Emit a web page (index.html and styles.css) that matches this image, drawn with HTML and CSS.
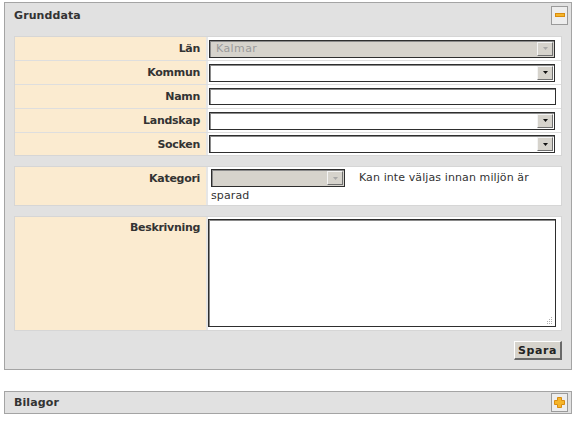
FILE: index.html
```html
<!DOCTYPE html>
<html lang="sv">
<head>
<meta charset="utf-8">
<title>Grunddata</title>
<link rel="stylesheet" href="styles.css">
</head>
<body>
<div class="panel">
  <div class="panel-head">
    <span class="panel-title">Grunddata</span>
    <span class="toggle">
      <svg width="10" height="4" viewBox="0 0 10 4"><rect x="0.5" y="0.5" width="9" height="3" fill="#f5b52a" stroke="#d98c10" stroke-width="1"/></svg>
    </span>
  </div>
  <div class="panel-body">
    <div class="form-block">
      <div class="row">
        <div class="label">Län</div>
        <div class="cell">
          <div class="select disabled"><span class="sel-text">Kalmar</span><span class="arrow"><svg width="5" height="3" viewBox="0 0 5 3"><path d="M0 0H5L2.5 3Z" fill="#a8a8a8"/></svg></span></div>
        </div>
      </div>
      <div class="row">
        <div class="label">Kommun</div>
        <div class="cell">
          <div class="select"><span class="sel-text"></span><span class="arrow"><svg width="5" height="3" viewBox="0 0 5 3"><path d="M0 0H5L2.5 3Z" fill="#111"/></svg></span></div>
        </div>
      </div>
      <div class="row">
        <div class="label">Namn</div>
        <div class="cell">
          <div class="textbox"></div>
        </div>
      </div>
      <div class="row">
        <div class="label">Landskap</div>
        <div class="cell">
          <div class="select"><span class="sel-text"></span><span class="arrow"><svg width="5" height="3" viewBox="0 0 5 3"><path d="M0 0H5L2.5 3Z" fill="#111"/></svg></span></div>
        </div>
      </div>
      <div class="row last">
        <div class="label">Socken</div>
        <div class="cell">
          <div class="select"><span class="sel-text"></span><span class="arrow"><svg width="5" height="3" viewBox="0 0 5 3"><path d="M0 0H5L2.5 3Z" fill="#111"/></svg></span></div>
        </div>
      </div>
    </div>

    <div class="form-block">
      <div class="row last tall">
        <div class="label top">Kategori</div>
        <div class="cell wrap">
          <span class="select disabled small"><span class="sel-text"></span><span class="arrow"><svg width="5" height="3" viewBox="0 0 5 3"><path d="M0 0H5L2.5 3Z" fill="#a8a8a8"/></svg></span></span><span class="note">Kan inte väljas innan miljön är sparad</span>
        </div>
      </div>
    </div>

    <div class="form-block">
      <div class="row last desc">
        <div class="label top2">Beskrivning</div>
        <div class="cell area-cell">
          <div class="textarea"><span class="grip"><svg width="7" height="7" viewBox="0 0 7 7"><g fill="#b0b0b0"><rect x="5" y="0" width="1" height="1"/><rect x="3" y="2" width="1" height="1"/><rect x="5" y="2" width="1" height="1"/><rect x="1" y="4" width="1" height="1"/><rect x="3" y="4" width="1" height="1"/><rect x="5" y="4" width="1" height="1"/><rect x="1" y="6" width="1" height="1"/><rect x="3" y="6" width="1" height="1"/><rect x="5" y="6" width="1" height="1"/></g></svg></span></div>
        </div>
      </div>
    </div>

    <div class="actions">
      <span class="btn">Spara</span>
    </div>
  </div>
</div>

<div class="panel collapsed">
  <div class="panel-head small-head">
    <span class="panel-title">Bilagor</span>
    <span class="toggle">
      <svg width="11" height="11" viewBox="0 0 11 11"><path d="M3.5 0.5H7.5V3.5H10.5V7.5H7.5V10.5H3.5V7.5H0.5V3.5H3.5Z" fill="#f5b52a" stroke="#d98c10" stroke-width="1"/></svg>
    </span>
  </div>
</div>
</body>
</html>
```
FILE: styles.css
```css
html, body {
  margin: 0;
  padding: 0;
  background: #ffffff;
}
body {
  padding: 2px 10px 0 4px;
  font-family: "DejaVu Sans", Verdana, sans-serif;
  font-size: 11px;
  color: #333333;
}
.panel {
  border: 1px solid #a4a4a4;
  background: #e1e1e1;
}
.panel.collapsed {
  margin-top: 21px;
}
.panel-head {
  height: 24px;
  display: flex;
  align-items: center;
  justify-content: space-between;
  padding: 0 3px 0 9px;
}
.small-head {
  height: 21px;
}
.panel-title {
  font-weight: bold;
  font-size: 11px;
  color: #333333;
  letter-spacing: 0.1px;
}
.toggle {
  width: 15px;
  height: 17px;
  border: 1px solid #9a9a9a;
  background: #ededed;
  display: flex;
  align-items: center;
  justify-content: center;
}
.panel-body {
  padding: 9px 9px 9px 9px;
}
.form-block {
  background: #ffffff;
  border: 1px solid #d6d6d6;
  margin-bottom: 10px;
}
.row {
  box-sizing: border-box;
  display: flex;
  height: 24px;
  border-bottom: 1px solid #dedede;
}
.row.last {
  border-bottom: none;
  height: 22px;
}
.label {
  width: 185px;
  flex: none;
  background: #fbebd0;
  border-right: 2px solid #e6e6e6;
  font-weight: bold;
  text-align: right;
  padding-right: 6px;
  display: flex;
  align-items: center;
  justify-content: flex-end;
  color: #333333;
  letter-spacing: -0.3px;
}
.label.top {
  align-items: flex-start;
  padding-top: 5px;
}
.label.top2 {
  align-items: flex-start;
  padding-top: 4px;
}
.cell {
  flex: 1;
  display: flex;
  align-items: center;
  padding: 0 6px 0 1px;
}
.select {
  box-sizing: border-box;
  width: 346px;
  height: 18px;
  border: 1px solid #2e2e2e;
  background: #ffffff;
  display: flex;
  align-items: center;
  justify-content: space-between;
  box-shadow: inset 1px 1px 0 #8a8a8a;
}
.select.disabled {
  background: #d6d3cc;
}
.sel-text {
  padding-left: 6px;
  color: #9a9a9a;
  font-size: 11px;
  letter-spacing: 0.4px;
}
.arrow {
  box-sizing: border-box;
  width: 16px;
  height: 14px;
  margin-right: 1px;
  background: #d6d3cc;
  border-top: 1px solid #f4f4f4;
  border-left: 1px solid #f4f4f4;
  border-right: 1px solid #707070;
  border-bottom: 1px solid #707070;
  display: flex;
  align-items: center;
  justify-content: center;
}
.textbox {
  box-sizing: border-box;
  width: 347px;
  height: 17px;
  border: 1px solid #2e2e2e;
  box-shadow: inset 1px 1px 0 #8a8a8a;
  background: #ffffff;
}
.row.tall {
  height: 38px;
}
.cell.wrap {
  display: block;
  padding: 2px 10px 0 3px;
  line-height: 17px;
  letter-spacing: 0.1px;
}
.select.small {
  display: inline-flex;
  vertical-align: top;
  width: 134px;
  height: 18px;
  margin-right: 14px;
}
.note {
  color: #333333;
}
.row.desc {
  height: 113px;
}
.area-cell {
  align-items: flex-start;
  padding: 2px 5px 0 0;
}
.textarea {
  box-sizing: border-box;
  width: 348px;
  height: 108px;
  border: 1px solid #2e2e2e;
  box-shadow: inset 1px 1px 0 #8a8a8a;
  background: #ffffff;
  display: flex;
  align-items: flex-end;
  justify-content: flex-end;
}
.grip {
  display: flex;
  margin: 0 2px 2px 0;
}
.actions {
  display: flex;
  justify-content: flex-end;
}
.btn {
  box-sizing: border-box;
  height: 19px;
  padding: 0 3px;
  display: flex;
  align-items: center;
  background: #d6d3cc;
  border-top: 1px solid #ffffff;
  border-left: 1px solid #ffffff;
  border-right: 2px solid #6a6a6a;
  border-bottom: 2px solid #6a6a6a;
  font-weight: bold;
  letter-spacing: 0.6px;
  color: #222222;
}
```
